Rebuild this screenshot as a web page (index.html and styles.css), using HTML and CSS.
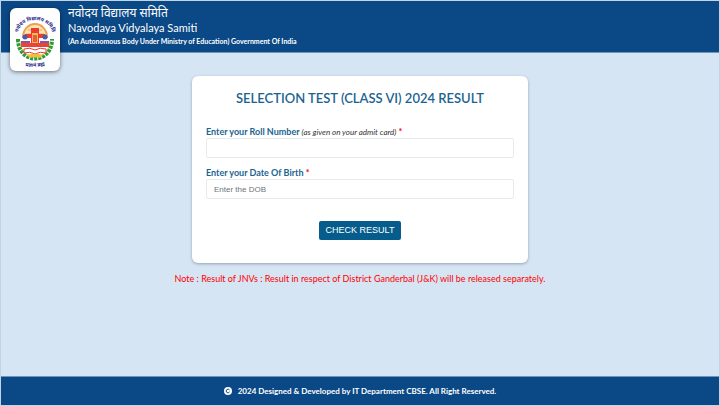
FILE: index.html
```html
<!DOCTYPE html>
<html lang="en">
<head>
  <meta charset="UTF-8" />
  <meta name="viewport" content="width=device-width, initial-scale=1.0" />
  <title>Navodaya Vidyalaya Samiti - Result</title>
  <link rel="stylesheet" href="styles.css">
</head>
<body>
  <header class="header">
    <div class="logo">
      <svg viewBox="0 0 42 56" width="42" height="56" aria-hidden="true">
        <defs>
          <path id="arcTop" d="M3 26 C3 2 39 2 39 26" />
          <path id="arcBottom" d="M8 53 Q21 57 34 52" />
        </defs>
        <!-- wreath -->
        <path d="M4 27 C4 53 38 53 38 27" fill="none" stroke="#2f9a3c" stroke-width="4" stroke-dasharray="3 1" />
        <path d="M6 29 C7 50 35 50 36 29" fill="none" stroke="#d9d93a" stroke-width="1.500" stroke-dasharray="1.500 2.500" />
        <!-- dome and rays -->
        <path d="M9 25 A12 13 0 0 1 33 25 Z" fill="#fbe3b8" stroke="#f0a04a" stroke-width="2" />
        <path d="M12 22 H30 M14 18 H28" stroke="#f4a35a" stroke-width="1" />
        <!-- lamp -->
        <path d="M17 16 H25 V22 H31 V26 H25 V32 H17 V26 H11 V22 H17 Z" fill="#ea3d2e" />
        <path d="M18 21 H24 V31 H18 Z" fill="#f7b85a" />
        <path d="M19 23 H23 V30 H19 Z" fill="#ef5b3a" />
        <!-- figures -->
        <circle cx="11" cy="25" r="2.500" fill="#4060b5" />
        <circle cx="31" cy="25" r="2.500" fill="#4060b5" />
        <path d="M7 29 H16 V35 H7 Z M26 29 H35 V35 H26 Z" fill="#8a52ad" />
        <path d="M7 31 H35 V35 H7 Z" fill="#e8443a" />
        <!-- open book -->
        <path d="M10 37 Q16 35 21 38 Q26 35 32 37 V41 Q26 39 21 42 Q16 39 10 41 Z" fill="#fff" stroke="#e63a30" stroke-width="1" />
        <path d="M13 43 Q21 40 29 43 L26 46 Q21 44 16 46 Z" fill="#f3bd3c" />
        <text class="logo-text"><textPath href="#arcTop" startOffset="50%" text-anchor="middle">नवोदय विद्यालय समिति</textPath></text>
        <text class="logo-text"><textPath href="#arcBottom" startOffset="50%" text-anchor="middle">प्रज्ञानं ब्रह्म</textPath></text>
      </svg>
    </div>
    <div class="brand">
      <div class="brand-hindi" lang="hi">नवोदय विद्यालय समिति</div>
      <div class="brand-name">Navodaya Vidyalaya Samiti</div>
      <div class="brand-sub">(An Autonomous Body Under Ministry of Education) Government Of India</div>
    </div>
  </header>

  <main class="main">
    <form class="card">
      <h1>SELECTION TEST (CLASS VI) 2024 RESULT</h1>
      <label for="rollNumber">Enter your Roll Number <i>(as given on your admit card)</i> <span class="required">*</span></label>
      <input type="text" id="rollNumber" required />
      <label for="dob">Enter your Date Of Birth <span class="required">*</span></label>
      <input type="text" id="dob" placeholder="Enter the DOB" required />
      <button type="submit">CHECK RESULT</button>
    </form>
    <p class="note">Note : Result of JNVs : Result in respect of District Ganderbal (J&amp;K) will be released separately.</p>
  </main>

  <footer class="footer">
    <svg viewBox="0 0 8 8" width="8" height="8" aria-hidden="true">
      <circle cx="4" cy="4" r="4" fill="#fff" />
      <path d="M5.500 3 A1.800 1.800 0 1 0 5.500 5" fill="none" stroke="#0b4886" stroke-width="1" />
    </svg>
    <span>2024 Designed &amp; Developed by IT Department CBSE. All Right Reserved.</span>
  </footer>
</body>
</html>
```

FILE: styles.css
```css
* {
  box-sizing: border-box;
}
body {
  display: flex;
  flex-direction: column;
  min-height: 100vh;
  margin: 0;
  border: 1px solid #c3d5e5;
  background-color: #d6e5f4;
  font-family: Lato, "Noto Sans", sans-serif;
  font-size: 9px;
}
.header {
  display: flex;
  gap: 8px;
  height: 52px;
  padding: 0 9px;
  background-color: #0b4886;
  border-bottom: 1px solid #6f93b9;
  color: white;
}
.logo {
  flex: none;
  display: flex;
  justify-content: center;
  align-items: center;
  width: 50px;
  height: 63px;
  margin-top: 7px;
  background-color: white;
  border-radius: 6px;
  box-shadow: 0 1px 4px rgba(0, 0, 0, 0.5);
}
.logo svg {
  overflow: visible;
}
.logo-text {
  font-family: "Noto Sans", sans-serif;
  font-size: 5px;
  font-weight: bold;
  fill: #26268c;
}
.brand {
  padding-top: 4px;
}
.brand-hindi {
  font-size: 12px;
  line-height: 16px;
}
.brand-name {
  font-size: 11px;
  line-height: 14px;
}
.brand-sub {
  font-size: 7px;
  font-weight: bold;
  line-height: 12px;
}
.main {
  flex: 1;
  padding: 23px 16px;
}
.card {
  display: flex;
  flex-direction: column;
  max-width: 336px;
  margin: 0 auto;
  padding: 14px;
  background-color: white;
  border-radius: 6px;
  box-shadow: 0 1px 3px rgba(0, 0, 0, 0.3);
  color: #1c6490;
}
.card h1 {
  margin: 0 0 20px;
  font-size: 13px;
  font-weight: 600;
  line-height: 16px;
  text-align: center;
}
.card label {
  font-weight: bold;
  line-height: 12px;
}
.card label i {
  color: #333;
  font-size: 8px;
  font-weight: normal;
}
.required {
  color: red;
}
.card input {
  height: 20px;
  margin: 0 0 9px;
  padding: 0 7px;
  border: 1px solid #e8eaec;
  border-radius: 2px;
  font-family: "Liberation Sans", Arial, sans-serif;
  font-size: 8px;
}
.card input::placeholder {
  color: #6c757d;
}
.card button {
  align-self: center;
  margin: 13px 0 9px;
  padding: 0 7px;
  border: none;
  border-radius: 2px;
  background-color: #065d8c;
  color: white;
  font-family: "Liberation Sans", Arial, sans-serif;
  font-size: 9px;
  line-height: 19px;
  cursor: pointer;
}
.card button:hover {
  background-color: #0b4886;
}
.note {
  margin: 10px 0 0;
  color: red;
  line-height: 12px;
  text-align: center;
}
.footer {
  display: flex;
  justify-content: center;
  align-items: center;
  gap: 6px;
  height: 29px;
  background-color: #0b4886;
  border-top: 1px solid #6f93b9;
  color: white;
  font-size: 8px;
  font-weight: bold;
}
```
